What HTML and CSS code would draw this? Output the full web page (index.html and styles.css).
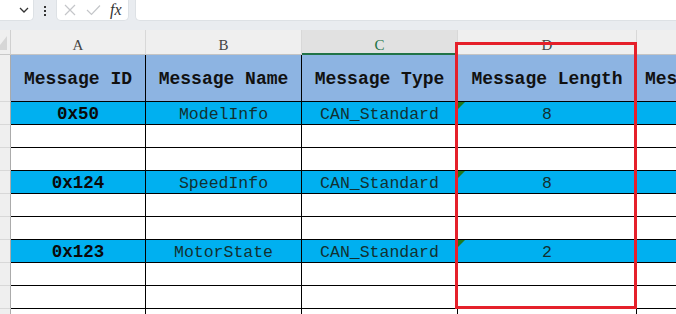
FILE: index.html
```html
<!DOCTYPE html>
<html>
<head>
<meta charset="utf-8">
<link rel="stylesheet" href="styles.css">
</head>
<body>
<div class="page">
  <div class="toolbar">
    <div class="box box-name">
      <svg class="chev" width="10" height="6" viewBox="0 0 10 6"><polyline points="1,1 5,5 9,1" fill="none" stroke="#333" stroke-width="1.3"/></svg>
    </div>
    <div class="dots"><span></span><span></span><span></span></div>
    <div class="box box-btns">
      <svg width="12" height="12" viewBox="0 0 12 12"><path d="M1 1L11 11M11 1L1 11" stroke="#c4c6c9" stroke-width="1.2" fill="none"/></svg>
      <svg width="15" height="12" viewBox="0 0 15 12"><path d="M1 6L5.5 10.5L14 1.5" stroke="#c4c6c9" stroke-width="1.2" fill="none"/></svg>
      <span class="fx">fx</span>
    </div>
    <div class="box box-formula"></div>
  </div>

  <div class="sheet">
    <div class="grid">
      <!-- column headers -->
      <div class="corner"></div>
      <div class="colh">A</div>
      <div class="colh">B</div>
      <div class="colh sel">C</div>
      <div class="colh">D</div>
      <div class="colh last"></div>

      <!-- header row -->
      <div class="rowh"></div>
      <div class="hd">Message ID</div>
      <div class="hd">Message Name</div>
      <div class="hd">Message Type</div>
      <div class="hd">Message Length</div>
      <div class="hd e">Message Cycle</div>

      <!-- 0x50 -->
      <div class="rowh"></div>
      <div class="c blue id">0x50</div>
      <div class="c blue">ModelInfo</div>
      <div class="c blue">CAN_Standard</div>
      <div class="c blue flag">8</div>
      <div class="c blue e"></div>

      <div class="rowh"></div><div class="c"></div><div class="c"></div><div class="c"></div><div class="c"></div><div class="c e"></div>
      <div class="rowh"></div><div class="c"></div><div class="c"></div><div class="c"></div><div class="c"></div><div class="c e"></div>

      <!-- 0x124 -->
      <div class="rowh"></div>
      <div class="c blue id">0x124</div>
      <div class="c blue">SpeedInfo</div>
      <div class="c blue">CAN_Standard</div>
      <div class="c blue flag">8</div>
      <div class="c blue e"></div>

      <div class="rowh"></div><div class="c"></div><div class="c"></div><div class="c"></div><div class="c"></div><div class="c e"></div>
      <div class="rowh"></div><div class="c"></div><div class="c"></div><div class="c"></div><div class="c"></div><div class="c e"></div>

      <!-- 0x123 -->
      <div class="rowh"></div>
      <div class="c blue id">0x123</div>
      <div class="c blue">MotorState</div>
      <div class="c blue">CAN_Standard</div>
      <div class="c blue flag">2</div>
      <div class="c blue e"></div>

      <div class="rowh"></div><div class="c"></div><div class="c"></div><div class="c"></div><div class="c"></div><div class="c e"></div>
      <div class="rowh"></div><div class="c"></div><div class="c"></div><div class="c"></div><div class="c"></div><div class="c e"></div>
      <div class="rowh"></div><div class="c"></div><div class="c"></div><div class="c"></div><div class="c"></div><div class="c e"></div>
    </div>
    <div class="highlight"></div>
  </div>
</div>
</body>
</html>
```

FILE: styles.css
```css
html, body {
  margin: 0;
  padding: 0;
  background: #ffffff;
}
.page {
  width: 676px;
  height: 314px;
  overflow: hidden;
  font-family: "Liberation Mono", monospace;
}

/* toolbar */
.toolbar {
  height: 30px;
  background: #e9ecf0;
  display: flex;
  align-items: flex-start;
  box-sizing: border-box;
}
.box {
  height: 21px;
  background: #ffffff;
  box-sizing: border-box;
  border: 1px solid #dde1e5;
  border-top: none;
  display: flex;
  align-items: center;
}
.box-name {
  width: 34px;
  border-left: none;
  border-radius: 0 0 5px 0;
  justify-content: flex-end;
  padding-right: 4px;
}
.dots {
  width: 22px;
  height: 21px;
  display: flex;
  flex-direction: column;
  align-items: center;
  justify-content: center;
  gap: 2px;
}
.dots span {
  width: 2px;
  height: 2px;
  background: #333;
}
.box-btns {
  width: 73px;
  border-radius: 0 0 5px 5px;
  padding-left: 7px;
  gap: 10px;
}
.fx {
  font-family: "Liberation Serif", serif;
  font-style: italic;
  font-size: 16px;
  color: #333;
  margin-left: -1px;
}
.box-formula {
  flex: 1;
  margin-left: 6px;
  border-right: none;
  border-radius: 0 0 0 5px;
}

/* sheet */
.sheet {
  position: relative;
}
.grid {
  display: grid;
  grid-template-columns: 11px 135px 156px 156px 179px 1fr;
  grid-template-rows: 25px 47px repeat(10, 23px);
}
.grid > div {
  box-sizing: border-box;
  border-right: 1px solid #000;
  border-bottom: 1px solid #000;
  display: flex;
  align-items: center;
  justify-content: center;
  white-space: nowrap;
  overflow: hidden;
  position: relative;
}
.grid > .corner {
  background: #efefef;
  border-right: 1px solid #d0d0d0;
  border-bottom: 1px solid #c8c8c8;
}
.corner::after {
  content: "";
  position: absolute;
  right: 3px;
  bottom: 4px;
  border-left: 11px solid transparent;
  border-bottom: 14px solid #d6d6d6;
}
.grid > .colh {
  background: #efefef;
  border-right: 1px solid #d8d8d8;
  border-bottom: 1px solid #c4c4c4;
  font-family: "Liberation Serif", serif;
  font-size: 15px;
  color: #444;
  padding-top: 6px;
}
.grid > .colh.sel {
  background: #e1e1e1;
  color: #217346;
  border-bottom: 2px solid #217346;
  padding-top: 7px;
}
.grid > .colh.last {
  border-right: none;
}
.grid > .rowh {
  background: #efefef;
  border-right: 1px solid #ababab;
  border-bottom: 1px solid #d8d8d8;
}
.grid > .hd {
  background: #8db4e2;
  font-weight: bold;
  font-size: 18px;
  color: #111;
  padding-top: 2px;
}
.grid > .hd.e {
  justify-content: flex-start;
  padding-left: 8px;
}
.grid > .c {
  background: #ffffff;
  font-size: 16.5px;
  color: #123030;
  padding-top: 2px;
}
.grid > .c.blue {
  background: #00b0f0;
}
.grid > .c.id {
  font-weight: bold;
  font-size: 17.5px;
  color: #0a0a0a;
}
.grid > .e {
  border-right: none;
}
.flag::before {
  content: "";
  position: absolute;
  left: 0;
  top: 0;
  border-top: 7px solid #1f7a1f;
  border-right: 7px solid transparent;
}

/* red annotation box */
.highlight {
  position: absolute;
  left: 455px;
  top: 12px;
  width: 182px;
  height: 267px;
  border: 3px solid #e5202a;
  box-sizing: border-box;
}
```
